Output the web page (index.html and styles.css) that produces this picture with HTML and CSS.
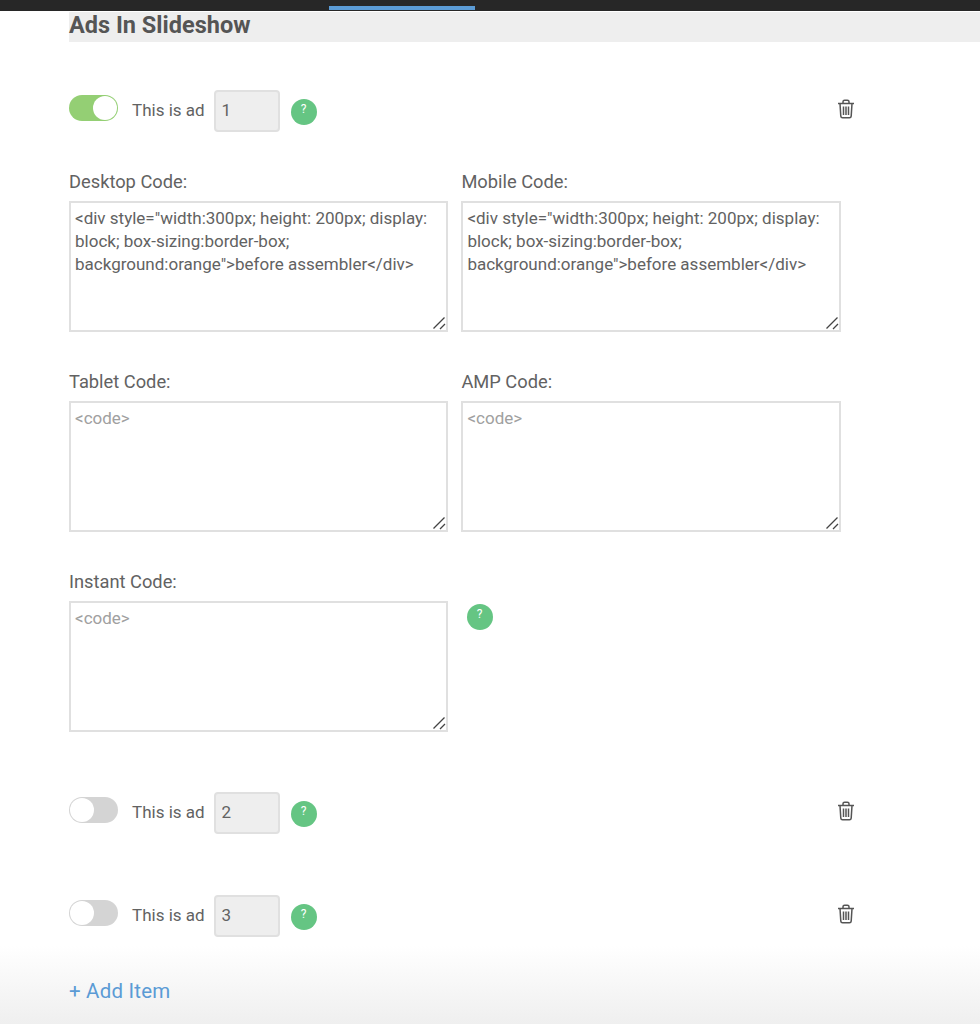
FILE: index.html
```html
<!DOCTYPE html>
<html lang="en">
<head>
<meta charset="utf-8">
<title>Ads In Slideshow</title>
<link rel="stylesheet" href="styles.css">
</head>
<body>
<svg class="sprite" width="0" height="0" aria-hidden="true">
  <symbol id="trash" viewBox="0 0 18 20">
    <path d="M1 4.5h16M3 4.5l.8 12.6c.1 1 .8 1.6 1.7 1.6h7c.9 0 1.6-.6 1.7-1.6L15 4.5M6 4.5V2.8C6 1.9 6.7 1.2 7.6 1.2h2.8c.9 0 1.6.7 1.6 1.6v1.7M6.5 7.5v8.5M9 7.5v8.5M11.5 7.5v8.5" fill="none" stroke="currentColor" stroke-width="1.5"/>
  </symbol>
  <symbol id="grip" viewBox="0 0 14 14">
    <path d="M1.5 12.5L12.5 1.5M8 13L13 8" fill="none" stroke="currentColor" stroke-width="1.3"/>
  </symbol>
</svg>
<div class="topbar"><span class="tab-indicator"></span></div>
<main class="content">
  <h2 class="section-title">Ads In Slideshow</h2>

  <section class="ad-row ad-row-first">
    <span class="toggle toggle-on"><span class="knob"></span></span>
    <span class="ad-label">This is ad</span>
    <input class="ad-number" type="text" value="1">
    <span class="help">?</span>
    <svg class="trash"><use href="#trash"/></svg>
  </section>

  <div class="code-grid">
    <div class="field">
      <label class="field-label">Desktop Code:</label>
      <div class="code-box">
        <textarea class="code">&lt;div style="width:300px; height: 200px; display: block; box-sizing:border-box; background:orange"&gt;before assembler&lt;/div&gt;</textarea>
        <svg class="grip"><use href="#grip"/></svg>
      </div>
    </div>
    <div class="field">
      <label class="field-label">Mobile Code:</label>
      <div class="code-box">
        <textarea class="code">&lt;div style="width:300px; height: 200px; display: block; box-sizing:border-box; background:orange"&gt;before assembler&lt;/div&gt;</textarea>
        <svg class="grip"><use href="#grip"/></svg>
      </div>
    </div>
    <div class="field">
      <label class="field-label">Tablet Code:</label>
      <div class="code-box">
        <textarea class="code" placeholder="<code>"></textarea>
        <svg class="grip"><use href="#grip"/></svg>
      </div>
    </div>
    <div class="field">
      <label class="field-label">AMP Code:</label>
      <div class="code-box">
        <textarea class="code" placeholder="<code>"></textarea>
        <svg class="grip"><use href="#grip"/></svg>
      </div>
    </div>
    <div class="field">
      <label class="field-label">Instant Code:</label>
      <div class="code-box">
        <textarea class="code" placeholder="<code>"></textarea>
        <svg class="grip"><use href="#grip"/></svg>
      </div>
    </div>
    <div class="field field-help">
      <span class="help">?</span>
    </div>
  </div>

  <section class="ad-row ad-row-second">
    <span class="toggle"><span class="knob"></span></span>
    <span class="ad-label">This is ad</span>
    <input class="ad-number" type="text" value="2">
    <span class="help">?</span>
    <svg class="trash"><use href="#trash"/></svg>
  </section>

  <section class="ad-row ad-row-third">
    <span class="toggle"><span class="knob"></span></span>
    <span class="ad-label">This is ad</span>
    <input class="ad-number" type="text" value="3">
    <span class="help">?</span>
    <svg class="trash"><use href="#trash"/></svg>
  </section>
</main>
<footer class="add-bar"><a class="add-item">+ Add Item</a></footer>
</body>
</html>
```
FILE: styles.css
```css
* { box-sizing: border-box; }
html, body { margin: 0; height: 1024px; overflow: hidden; background: #fff; }
body { font-family: Roboto, "Liberation Sans", sans-serif; color: #626262; }
.sprite { display: block; height: 0; }
.topbar { height: 12px; background: #272727; border-bottom: 1px solid #fff; }
.tab-indicator { display: block; width: 146px; height: 4px; margin-left: 329px; position: relative; top: 6px; background: #5b9bd5; }
.content { padding-left: 69px; }
.section-title { margin: 0; height: 30px; background: #eee; font-size: 23.5px; line-height: 27px; font-weight: 700; color: #555; }
.ad-row { display: flex; align-items: center; height: 42px; width: 786px; }
.ad-row-first { margin-top: 48px; }
.ad-row-second { margin-top: 60px; }
.ad-row-third { margin-top: 61px; }
.toggle { width: 49px; height: 26px; border-radius: 13px; background: #d4d4d4; padding: 1px; display: flex; position: relative; top: -3px; }
.toggle-on { background: #94cf74; justify-content: flex-end; }
.knob { width: 24px; height: 24px; border-radius: 50%; background: #fff; }
.ad-label { margin-left: 14px; font-size: 17px; white-space: nowrap; padding-bottom: 2px; }
.ad-number { width: 66px; height: 42px; margin-left: 9px; padding: 0 6px 2px; border: 2px solid #e0e0e0; border-radius: 4px; background: #eee; font: 17px Roboto, sans-serif; color: #626262; }
.help { width: 26px; height: 26px; border-radius: 50%; background: #65c583; color: #fff; font-size: 12px; display: flex; align-items: center; justify-content: center; padding-bottom: 6px; flex: none; }
.ad-row .help { margin-left: 11px; position: relative; top: 1px; }
.trash { width: 18px; height: 20px; margin-left: auto; color: #555; position: relative; top: -2px; }
.code-grid { display: grid; grid-template-columns: 379px 379.6px; column-gap: 13.4px; row-gap: 40px; margin-top: 40px; }
.field-label { display: block; font-size: 18.3px; line-height: 20px; margin-bottom: 9px; }
.code-box { position: relative; height: 131px; }
.code { display: block; width: 100%; height: 100%; padding: 4px 4px; border: 2px solid #e0e0e0; background: #fff; font: 17px/23px Roboto, sans-serif; color: #626262; outline: none; margin: 0; resize: none; }
.code::placeholder { color: #a0a0a0; }
.grip { position: absolute; right: 2px; bottom: 2px; width: 14px; height: 14px; color: #444; }
.field-help { padding: 32px 0 0 5.2px; }
.add-bar { position: absolute; left: 0; right: 0; bottom: 0; height: 78px; padding: 32px 0 0 69px; background: linear-gradient(#fff, #efefef); }
.add-item { font-size: 20.5px; line-height: 26px; color: #5b9bd5; letter-spacing: .2px; }
```
